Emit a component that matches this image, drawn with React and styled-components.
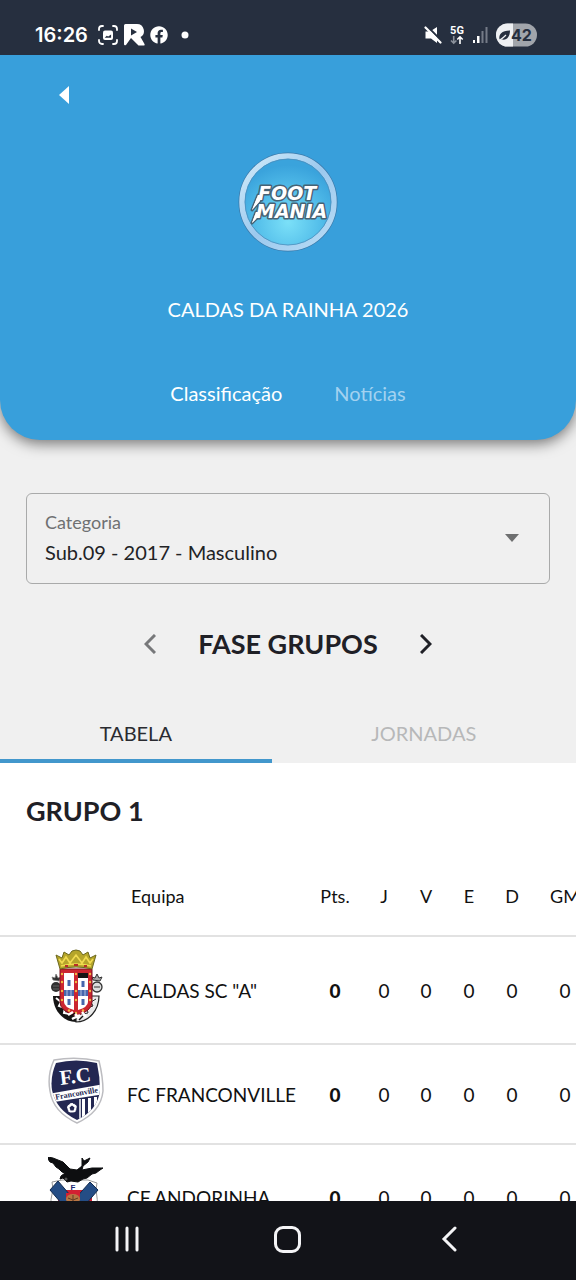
import React from "react";
import styled, { createGlobalStyle } from "styled-components";
import { FaFacebook } from "react-icons/fa";

const GlobalStyle = createGlobalStyle`
  *, *::before, *::after { box-sizing: border-box; }
  body {
    margin: 0;
    background: #f0f0f0;
    color: #1f2026;
    font-family: Lato, "Liberation Sans", sans-serif;
  }
  button { border: 0; padding: 0; background: none; color: inherit; font: inherit; cursor: pointer; }
`;

const Screen = styled.div`
  height: 100vh;
  display: flex;
  flex-direction: column;
  overflow: hidden;
`;

const StatusBar = styled.div`
  flex: none;
  height: 55px;
  padding: 15px 39px 0 35px;
  display: flex;
  align-items: center;
  justify-content: space-between;
  background: #262f3f;
  color: #fff;
`;

const StatusGroup = styled.div`
  display: flex;
  align-items: center;
  gap: ${(p) => p.$gap}px;
`;

const Clock = styled.time`
  margin-right: 5px;
  font: 600 20px/24px Inter, sans-serif;
`;

const Page = styled.main`
  flex: 1;
  min-height: 0;
  overflow-y: auto;
  scrollbar-width: none;
  display: flex;
  flex-direction: column;
`;

const Hero = styled.header`
  flex: none;
  display: flex;
  flex-direction: column;
  align-items: center;
  padding: 20px 44px 33px;
  border-radius: 0 0 40px 40px;
  background: #389fdb;
  color: #fff;
  box-shadow: 0 4px 14px rgba(0, 0, 0, 0.5);
`;

const BackButton = styled.button`
  align-self: flex-start;
  width: 40px;
  height: 40px;
  display: grid;
  place-items: center;
`;

const Logo = styled.svg`
  width: 100px;
  height: 100px;
  margin-top: 37px;
`;

const EventTitle = styled.h1`
  margin: 43px 0 56px;
  font-size: 20px;
  font-weight: 400;
  line-height: 28px;
`;

const HeroTabs = styled.nav`
  display: flex;
  gap: 52px;
`;

const HeroTab = styled.button`
  && {
    font-size: 20px;
    line-height: 28px;
    color: ${(p) => (p.$active ? "#fff" : "#a3d2f0")};
  }
`;

const Field = styled.div`
  flex: none;
  margin: 53px 26px 0;
  padding: 14px 30px 15px 18px;
  border: 1px solid #a9aaaa;
  border-radius: 6px;
  display: flex;
  align-items: center;
`;

const FieldBody = styled.div`
  flex: 1;
  display: flex;
  flex-direction: column;
`;

const FieldLabel = styled.label`
  font-size: 18px;
  line-height: 28px;
  color: #6f7072;
`;

const FieldSelect = styled.select`
  appearance: none;
  width: 100%;
  height: 32px;
  padding: 0;
  border: 0;
  background: none;
  color: #222326;
  font: 400 20px/32px Lato, sans-serif;
`;

const Stage = styled.section`
  flex: none;
  margin-top: 40px;
  display: flex;
  align-items: center;
  justify-content: center;
  gap: 32px;
`;

const StageTitle = styled.h2`
  margin: 0;
  font-size: 27px;
  font-weight: 700;
  line-height: 40px;
`;

const StageButton = styled.button`
  && { color: ${(p) => (p.$muted ? "#77787a" : "#1f2026")}; }
  width: 32px;
  height: 40px;
  display: grid;
  place-items: center;
`;

const Tabs = styled.div`
  flex: none;
  margin-top: 39px;
  display: flex;
`;

const Tab = styled.button`
  && {
    flex: 1 1 auto;
    height: 60px;
    padding-top: 4px;
    border-bottom: 4px solid ${(p) => (p.$active ? "#4297cc" : "transparent")};
    color: ${(p) => (p.$active ? "#2a2b30" : "#b7b8b9")};
    font-size: 20px;
    line-height: 28px;
  }
`;

const Group = styled.section`
  flex: 1 0 auto;
  background: #fff;
`;

const GroupTitle = styled.h3`
  margin: 0;
  padding: 28px 26px 26px;
  font-size: 27px;
  font-weight: 700;
  line-height: 40px;
`;

const TableScroller = styled.div`
  overflow-x: auto;
  overflow-y: hidden;
  scrollbar-width: none;
`;

const Table = styled.table`
  width: 100%;
  min-width: 597px;
  table-layout: fixed;
  border-collapse: separate;
  border-spacing: 0;
  color: #111;
`;

const Col = styled.col`
  width: ${(p) => (p.$width ? `${p.$width}px` : "auto")};
`;

const HeadCell = styled.th`
  height: 80px;
  padding: 0 0 0 ${(p) => (p.$left ? 17 : 0)}px;
  border-bottom: 2px solid #e2e2e2;
  text-align: ${(p) => (p.$left ? "left" : "center")};
  font-size: 18px;
  font-weight: 400;
`;

const Cell = styled.td`
  padding: ${(p) => (p.$left ? "0 0 0 13px" : "0")};
  border-bottom: 2px solid #e2e2e2;
  text-align: ${(p) => (p.$left ? "left" : "center")};
  font-size: 19px;
  font-weight: ${(p) => (p.$strong ? 900 : 400)};
  white-space: nowrap;
`;

const CrestCell = styled.td`
  padding: 12px 0 18px 48px;
  border-bottom: 2px solid #e2e2e2;
  svg { display: block; }
`;

const NavBar = styled.nav`
  flex: none;
  height: 79px;
  padding: 0 46px 3px;
  display: flex;
  background: #121318;
  color: #f4f4f6;
`;

const NavButton = styled.button`
  flex: 1;
  display: grid;
  place-items: center;
`;

const CaptureIcon = () => (
  <svg width="20" height="20" viewBox="0 0 20 20" fill="none" stroke="#fff" strokeWidth="1.8" strokeLinecap="round">
    <path d="M1 5V4a3 3 0 0 1 3-3h1M15 1h1a3 3 0 0 1 3 3v1M19 15v1a3 3 0 0 1-3 3h-1M5 19H4a3 3 0 0 1-3-3v-1" />
    <rect x="5" y="5.500" width="10" height="9.500" rx="2" fill="#fff" stroke="none" />
    <path d="M6.700 12.800l2-2 1.500.8 2.900-2.200v3.400z" fill="#262f3f" stroke="none" />
  </svg>
);

const AppLetterIcon = () => (
  <svg width="22" height="22" viewBox="0 0 22 22" fill="#fff">
    <path d="M1 1.500Q1 0 2.500 0H14a7 7 0 0 1 3.500 13l4 7q.5 1.500-1 1.500h-5L8 14l-5 7q-2 1-2-1z" />
    <path d="M8 4.500l6 3.500-6 3.500z" fill="#262f3f" />
  </svg>
);

const MuteIcon = () => (
  <svg width="18" height="18" viewBox="0 0 18 18">
    <path d="M1.500 5.500H6L13 1v16l-6-4.500H1.500z" fill="#fff" />
    <path d="M3 0l15 15.500" stroke="#262f3f" strokeWidth="2" />
    <path d="M1.500 1.500l15 15" stroke="#fff" strokeWidth="2.200" strokeLinecap="round" />
  </svg>
);

const NetworkIcon = () => (
  <svg width="14" height="20" viewBox="0 0 14 20" fill="none" strokeWidth="1.600">
    <text x="7" y="9" textAnchor="middle" fontFamily="Roboto, sans-serif" fontSize="11" fontWeight="700" fill="#fff">5G</text>
    <path d="M3.700 11v7M1 15.500l2.700 2.700 2.700-2.700" stroke="#8b919b" />
    <path d="M10 19v-7M7.300 14.500L10 11.800l2.700 2.700" stroke="#fff" />
  </svg>
);

const SignalIcon = () => (
  <svg width="16" height="16" viewBox="0 0 16 16">
    <path d="M1 13h2v3H1zM5 9h2.500v7H5z" fill="#fff" />
    <path d="M9.500 4h2v12h-2zM13.500 0h2v16h-2z" fill="#747b87" />
  </svg>
);

const BatteryIcon = () => (
  <svg width="41" height="24" viewBox="0 0 41 24">
    <defs>
      <clipPath id="charge"><rect width="17" height="24" /></clipPath>
    </defs>
    <rect y="0.500" width="41" height="23" rx="11.500" fill="#a1a5ab" />
    <rect y="0.500" width="41" height="23" rx="11.500" fill="#eef0f3" clipPath="url(#charge)" />
    <path d="M3.500 16.500c-1-5 2-9 10.500-9 0 6-3 10-8 9z" fill="#262f3f" />
    <path d="M2.500 17.500c3-1 5-3 7.500-5.500" stroke="#eef0f3" strokeWidth="1.200" fill="none" />
    <text x="15" y="18" fontFamily="Inter, sans-serif" fontWeight="700" fontSize="16" fill="#262f3f">42</text>
  </svg>
);

const FootManiaLogo = () => (
  <Logo viewBox="0 0 100 100" role="img" aria-label="Foot Mania">
    <defs>
      <radialGradient id="disc" cx="50%" cy="72%" r="62%">
        <stop offset="0" stopColor="#7be0f8" />
        <stop offset="0.600" stopColor="#51bce9" />
        <stop offset="1" stopColor="#3aa3dc" />
      </radialGradient>
      <linearGradient id="rim" x1="0" y1="0" x2="1" y2="1">
        <stop offset="0" stopColor="#d3ecfa" />
        <stop offset="0.500" stopColor="#9cc9ee" />
        <stop offset="1" stopColor="#b9dcf5" />
      </linearGradient>
    </defs>
    <circle cx="50" cy="50" r="49.500" fill="#3b78a8" />
    <circle cx="50" cy="50" r="46" fill="url(#disc)" stroke="url(#rim)" strokeWidth="5.500" />
    <circle cx="50" cy="50" r="43" fill="none" stroke="#4b8dbb" strokeWidth="0.800" />
    <g
      fontFamily="DejaVu Sans, sans-serif"
      fontWeight="700"
      fontStyle="italic"
      fontSize="19"
      fill="#fff"
      stroke="#466274"
      strokeWidth="3"
      strokeLinejoin="round"
      style={{ paintOrder: "stroke" }}
    >
      <path d="M20 43h4l-2 6-8 9zM18 60h4l-2 5-6 6z" />
      <text x="20" y="48">FOOT</text>
      <text x="18" y="66">MANIA</text>
    </g>
    <path d="M20 43h4l-2 6-8 9zM18 60h4l-2 5-6 6z" fill="#fff" />
  </Logo>
);

const CaldasCrest = () => (
  <svg width="56" height="76" viewBox="0 0 56 76" role="img" aria-label="Caldas SC">
    <path d="M5 47c0 14 10 26 23 26V47z" fill="#141414" />
    <path d="M51 47c0 14-10 26-23 26V47z" fill="#e9e9e9" stroke="#222" strokeWidth="1.200" />
    <path d="M8 49l5 4-2 4 6 2-1 5 6 1M48 50l-5 3 2 4-6 2 1 5-6 1" fill="none" stroke="#fff" strokeWidth="2" />
    <path d="M48 50l-5 3 2 4-6 2 1 5-6 1" fill="none" stroke="#222" />
    <circle cx="8" cy="38" r="5" fill="#303030" />
    <path d="M5 31l-1-3 3 1 1-4 2 4 3-1-2 4zM5 37h6M5 40h6" fill="#303030" stroke="#777" strokeWidth="0.700" />
    <circle cx="49" cy="38" r="5" fill="#ddd" stroke="#333" strokeWidth="1.300" />
    <path d="M45 31l-1-3 3 1 2-4 2 4 3-1-2 4zM46 38h6" fill="#aaa" stroke="#333" />
    <path d="M12 20h32v33q0 9-16 14-16-5-16-14z" fill="#cb2530" stroke="#7c1420" />
    <path d="M16 24h10v37q-10-3-10-8zM30 24h10v29q0 5-10 8z" fill="#fff" />
    <path d="M30 24h10v5H30z" fill="#151515" />
    <path d="M19.500 31h3v6h-3zM19.500 50h3v6h-3zM33.500 32h3v6h-3zM33.500 50h3v6h-3zM16 41h10v6H16zM30 41h10v6H30z" fill="#4766ac" />
    <path d="M19 41v6M23 41v6M33 41v6M37 41v6" stroke="#cbd5ee" strokeWidth="0.800" />
    <g fill="#efbb43">
      {[25, 33, 42, 51].map((y) => (
        <React.Fragment key={y}>
          <circle cx="14" cy={y} r="1.200" />
          <circle cx="28" cy={y} r="1.200" />
          <circle cx="42" cy={y} r="1.200" />
        </React.Fragment>
      ))}
      <circle cx="21" cy="61.500" r="1.200" />
      <circle cx="35" cy="61.500" r="1.200" />
      <circle cx="28" cy="64" r="1.200" />
    </g>
    <path d="M12 20L8 6l6 3 2-6 5 3 3-4 4-1 4 1 3 4 5-3 2 6 6-3-4 14q-16-4-32 0z" fill="#b5a52b" stroke="#6c681e" />
    <path d="M13 17q15-4 30 0M11 10l3 4 4-6 4 6 6-8 6 8 4-6 4 6 3-4" fill="none" stroke="#f1db50" strokeWidth="1.600" />
    <path d="M17 17h3M26 16h4M36 17h3" stroke="#b92c29" strokeWidth="2" />
    <path d="M20 66l5-3M24 70l8-4M32 70l-5-5M38 68l-4-5" stroke="#fff" strokeWidth="2.500" />
    <path d="M23 67l4-3M31 71l4-4" stroke="#111" strokeWidth="1.400" />
  </svg>
);

const FranconvilleCrest = () => (
  <svg width="56" height="68" viewBox="0 0 56 68" role="img" aria-label="FC Franconville">
    <defs>
      <clipPath id="shield"><path d="M8 6Q28 1 49 6Q52 20 52 33Q50 53 29 63Q8 53 4 33Q2 20 8 6z" /></clipPath>
    </defs>
    <path d="M6 3Q28-1 51 4Q55 20 55 34Q53 55 29 66Q5 55 2 34Q-1 18 6 3z" fill="#fff" stroke="#bcbcc0" strokeWidth="1.500" />
    <g clipPath="url(#shield)">
      <path d="M0 0h56v68H0z" fill="#232752" />
      <path d="M0 37L56 27v10L0 46z" fill="#fff" />
      <path d="M34 42h3v26h-3zM40 41h3v26h-3zM46 40h3v26h-3z" fill="#fff" />
      <path d="M32 42v25" stroke="#fff" strokeWidth="1.500" />
      <circle cx="24" cy="51" r="5" fill="#fff" />
      <circle cx="24" cy="51" r="5" fill="none" stroke="#232752" strokeDasharray="3 3" />
      <path d="M24 48.500l2.500 2-1 3h-3l-1-3z" fill="#232752" />
    </g>
    <text x="28" y="26" textAnchor="middle" transform="rotate(-7 28 26)" fontFamily="Liberation Serif, serif" fontWeight="700" fontSize="21" fill="#fff">F.C</text>
    <text x="29" y="39" textAnchor="middle" transform="rotate(-10 29 39)" fontFamily="Liberation Serif, serif" fontWeight="700" fontSize="8" fill="#232752">Franconville</text>
  </svg>
);

const AndorinhaCrest = () => (
  <svg width="56" height="74" viewBox="0 0 56 74" role="img" aria-label="CF Andorinha">
    <path d="M4 25l10-2h26l9 3-1 6q2 10 1 22-8 12-23 18Q10 66 3 54q-1-12 2-22z" fill="#fff" stroke="#999" />
    <path d="M10 33h34v20H10z" fill="#d31f32" />
    <path d="M10 24L2 33l24 28 8-9zM42 25l8 8-24 28-8-9z" fill="#244d85" stroke="#122c50" />
    <path d="M17 24h18l-3 9H20z" fill="#fff" />
    <text x="25" y="33" textAnchor="middle" fontFamily="Liberation Sans, sans-serif" fontWeight="700" fontSize="8" fill="#202a72">F</text>
    <path d="M18 43V36h14v7z" fill="#d31f32" />
    <ellipse cx="25" cy="42" rx="7" ry="5" fill="#b87543" />
    <path d="M20 41l5 2 5-2M25 38v9" stroke="#633b24" fill="none" />
    <path
      d="M0 0l5 1 10 4 4 4 3 3 7 1 5-4V1l2 3 6-3-2 4-5 4-1 4 10-2h11l-3 2-4 3-4 1-5 4-4 1-5 3-7-1-4 1-4-4-3 1 1-3 4-3-3-1-3-3-3-2-3-4-3-1-2-3z"
      fill="#0d0e10"
      stroke="#0d0e10"
      strokeLinejoin="round"
    />
    <circle cx="18" cy="22" r="1.500" fill="#555" />
  </svg>
);

const columns = ["Pts.", "J", "V", "E", "D", "GM"];
const columnWidths = [56, 42, 42, 44, 42, 64];
const teams = [
  { name: 'CALDAS SC "A"', Crest: CaldasCrest, stats: [0, 0, 0, 0, 0, 0] },
  { name: "FC FRANCONVILLE", Crest: FranconvilleCrest, stats: [0, 0, 0, 0, 0, 0] },
  { name: "CF ANDORINHA", Crest: AndorinhaCrest, stats: [0, 0, 0, 0, 0, 0] },
];

export default function App() {
  return (
    <Screen>
      <GlobalStyle />
      <StatusBar>
        <StatusGroup $gap={5}>
          <Clock>16:26</Clock>
          <CaptureIcon />
          <AppLetterIcon />
          <FaFacebook size={18} />
          <svg width="28" height="8" viewBox="0 0 28 8"><circle cx="12" cy="4" r="3.500" fill="#fff" /></svg>
        </StatusGroup>
        <StatusGroup $gap={8}>
          <MuteIcon />
          <NetworkIcon />
          <SignalIcon />
          <BatteryIcon />
        </StatusGroup>
      </StatusBar>

      <Page>
        <Hero>
          <BackButton aria-label="Voltar">
            <svg width="10" height="18" viewBox="0 0 10 18"><path d="M10 0v18L0 9z" fill="#fff" /></svg>
          </BackButton>
          <FootManiaLogo />
          <EventTitle>CALDAS DA RAINHA 2026</EventTitle>
          <HeroTabs>
            <HeroTab $active>Classificação</HeroTab>
            <HeroTab>Notícias</HeroTab>
          </HeroTabs>
        </Hero>

        <Field>
          <FieldBody>
            <FieldLabel htmlFor="categoria">Categoria</FieldLabel>
            <FieldSelect id="categoria">
              <option>Sub.09 - 2017 - Masculino</option>
            </FieldSelect>
          </FieldBody>
          <svg width="14" height="8" viewBox="0 0 14 8"><path d="M0 0h14L7 8z" fill="#6e6f70" /></svg>
        </Field>

        <Stage>
          <StageButton $muted aria-label="Fase anterior">
            <svg width="12" height="20" viewBox="0 0 12 20" fill="none" stroke="currentColor" strokeWidth="3"><path d="M11 1L2 10l9 9" /></svg>
          </StageButton>
          <StageTitle>FASE GRUPOS</StageTitle>
          <StageButton aria-label="Fase seguinte">
            <svg width="12" height="20" viewBox="0 0 12 20" fill="none" stroke="currentColor" strokeWidth="3"><path d="M1 1l9 9-9 9" /></svg>
          </StageButton>
        </Stage>

        <Tabs role="tablist">
          <Tab $active role="tab" aria-selected="true">TABELA</Tab>
          <Tab role="tab" aria-selected="false">JORNADAS</Tab>
        </Tabs>

        <Group>
          <GroupTitle>GRUPO 1</GroupTitle>
          <TableScroller>
            <Table>
              <colgroup>
                <Col $width={114} />
                <Col />
                {columnWidths.map((width, i) => <Col key={i} $width={width} />)}
              </colgroup>
              <thead>
                <tr>
                  <HeadCell />
                  <HeadCell $left scope="col">Equipa</HeadCell>
                  {columns.map((label) => <HeadCell key={label} scope="col">{label}</HeadCell>)}
                </tr>
              </thead>
              <tbody>
                {teams.map(({ name, Crest, stats }) => (
                  <tr key={name}>
                    <CrestCell><Crest /></CrestCell>
                    <Cell $left>{name}</Cell>
                    {stats.map((value, i) => <Cell key={columns[i]} $strong={i === 0}>{value}</Cell>)}
                  </tr>
                ))}
              </tbody>
            </Table>
          </TableScroller>
        </Group>
      </Page>

      <NavBar>
        <NavButton aria-label="Recentes">
          <svg width="24" height="26" viewBox="0 0 24 26" stroke="currentColor" strokeWidth="3" strokeLinecap="round"><path d="M2 2v22M12 2v22M22 2v22" /></svg>
        </NavButton>
        <NavButton aria-label="Início">
          <svg width="27" height="27" viewBox="0 0 27 27" fill="none" stroke="currentColor" strokeWidth="3"><rect x="1.500" y="1.500" width="24" height="24" rx="7.500" /></svg>
        </NavButton>
        <NavButton aria-label="Anterior">
          <svg width="16" height="26" viewBox="0 0 16 26" fill="none" stroke="currentColor" strokeWidth="3" strokeLinecap="round"><path d="M14 2L3 13l11 11" /></svg>
        </NavButton>
      </NavBar>
    </Screen>
  );
}
